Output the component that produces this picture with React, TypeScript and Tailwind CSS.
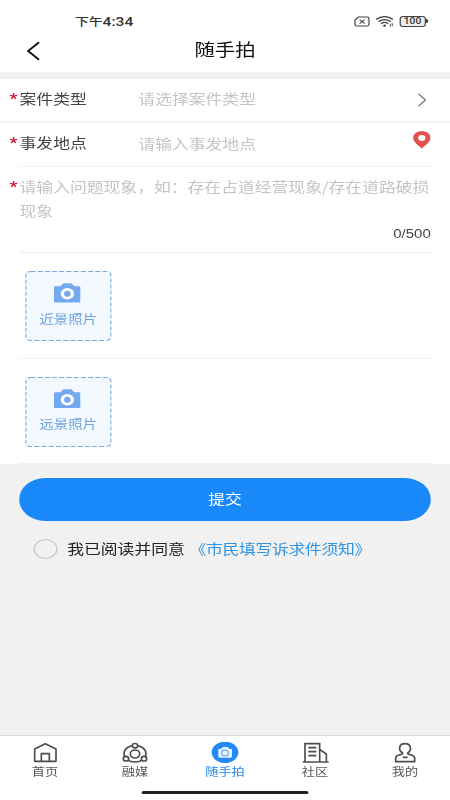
import type { ReactNode } from "react";

type IconProps = {
  viewBox: string;
  className: string;
  children: ReactNode;
};

function Icon({ viewBox, className, children }: IconProps) {
  return (
    <svg
      viewBox={viewBox}
      preserveAspectRatio="none"
      fill="none"
      className={`block shrink-0 ${className}`}
      aria-hidden
    >
      {children}
    </svg>
  );
}

function StatusBar() {
  return (
    <div className="flex h-7 items-start justify-between pt-[13px] pr-[18.5px] pl-[62.5px] text-[#333]">
      <span className="pt-[1px] font-[Roboto,'Noto_Sans_CJK_SC',sans-serif] text-[13px] leading-[16px] font-medium">
        <span className="text-[11.5px]">下午</span>4:34
      </span>
      <div className="flex items-center pt-[2.5px]">
        <Icon viewBox="0 0 48 33" className="h-[11px] w-[13.3px]">
          <path
            d="M13 3H40Q45 3 45 8V25Q45 30 40 30H8Q3 30 3 25V12Z"
            stroke="#444"
            strokeWidth="3.5"
          />
          <path d="M17 11L32 23M32 11L17 23" stroke="#444" strokeWidth="3.5" />
        </Icon>
        <Icon viewBox="0 0 54 33" className="ml-[4.5px] h-[11px] w-[15px]">
          <path
            d="M2 10Q27 -6 52 10M9 17Q27 5 45 17M16 23Q27 15 38 23"
            stroke="#444"
            strokeWidth="4"
          />
          <ellipse cx="27" cy="29" rx="4" ry="3.5" fill="#444" />
          <path d="M44 23V32M50 22V31" stroke="#555" strokeWidth="3" />
        </Icon>
        <div className="ml-[5px] flex h-[11px] w-[21.5px] items-center justify-center rounded-[3px] border border-[#444] bg-[#eee] font-[Roboto,sans-serif] text-[8.5px] leading-none font-medium">
          100
        </div>
        <div className="ml-[0.5px] h-[4px] w-[1.5px] rounded-r bg-[#444]" />
      </div>
    </div>
  );
}

function Header() {
  return (
    <header className="flex h-11 items-center px-[21.5px] pb-[3px]">
      <Icon viewBox="0 0 42 60" className="mt-[5px] h-5 w-[12px]">
        <path d="M37 4L5 30L37 56" stroke="#111" strokeWidth="5.5" />
      </Icon>
      <h1 className="flex-1 pr-[12px] text-center text-[17px] leading-6 text-[#111]">
        随手拍
      </h1>
    </header>
  );
}

function Required() {
  return (
    <span className="w-[8.3px] shrink-0 pt-px font-[Roboto,sans-serif] text-[15px] leading-6 font-medium text-[#c8102e]">
      *
    </span>
  );
}

function PhotoUpload({ label }: { label: string }) {
  return (
    <div className="mr-4 ml-[16.3px] border-b border-[#f1f1f1] pt-[18px] pb-[16.5px] pl-[4.6px]">
      <button
        type="button"
        className="relative flex h-[70px] w-[72px] flex-col items-center bg-[#f3f9ff] pt-[12px]"
      >
        <svg className="absolute inset-0 h-full w-full" fill="none" aria-hidden>
          <rect
            x="0.5"
            y="0.5"
            width="71"
            height="69"
            rx="4"
            stroke="#74a9dc"
            strokeDasharray="4 2"
          />
        </svg>
        <Icon viewBox="0 0 80 58" className="mr-[2.4px] h-[19.5px] w-[22.3px]">
          <path
            d="M4 10H19L26 3Q28 1 31 1H49Q52 1 54 3L61 10H76Q80 10 80 14V54Q80 58 76 58H4Q0 58 0 54V14Q0 10 4 10Z"
            fill="#73a9ee"
          />
          <ellipse cx="40" cy="32" rx="20" ry="17" fill="#fff" />
          <ellipse cx="40" cy="32" rx="10" ry="9" fill="#73a9ee" />
        </Icon>
        <span className="mt-[7px] text-[12px] leading-[18px] text-[#6ba3dc]">{label}</span>
      </button>
    </div>
  );
}

const tabs = [
  {
    label: "首页",
    icon: (
      <path
        d="M14 58V21L46 5L78 21V58ZM34 58V35H58V58"
        stroke="#4d4d4d"
        strokeWidth="5"
        strokeLinejoin="round"
      />
    ),
  },
  {
    label: "融媒",
    icon: (
      <g stroke="#4d4d4d" strokeWidth="5">
        <ellipse cx="45" cy="35" rx="33" ry="25" />
        <ellipse cx="45" cy="36" rx="14" ry="12" />
        <ellipse cx="45" cy="11" rx="8" ry="6.5" fill="#fff" />
        <ellipse cx="18" cy="50" rx="8" ry="7" fill="#fff" />
        <ellipse cx="72" cy="50" rx="8" ry="7" fill="#fff" />
      </g>
    ),
  },
  {
    label: "随手拍",
    active: true,
    icon: (
      <>
        <ellipse cx="45" cy="31" rx="40" ry="32" fill="#2589f5" />
        <path
          d="M28 20H34L38 15H53L57 20H63Q66 20 66 23V43Q66 47 62 47H29Q25 47 25 43V23Q25 20 28 20Z"
          fill="#e8f3ff"
        />
        <ellipse cx="45" cy="33" rx="10" ry="9" stroke="#4a9df7" strokeWidth="3" />
      </>
    ),
  },
  {
    label: "社区",
    icon: (
      <path
        d="M8 60H86M15 60V5H59V60M59 22L79 36V60M25 17H49M25 29H49M25 41H49"
        stroke="#4d4d4d"
        strokeWidth="5"
      />
    ),
  },
  {
    label: "我的",
    icon: (
      <path
        d="M38 33C24 25 26 5 45 5C64 5 66 25 53 33C52 37 57 37 65 39Q74 42 74 49V59H17V49Q17 42 27 39C34 37 39 37 38 33ZM38 46H53"
        stroke="#4d4d4d"
        strokeWidth="5"
      />
    ),
  },
];

function TabBar() {
  return (
    <nav className="flex h-[65px] shrink-0 flex-col border-t border-[#dcdcdc] bg-white">
      <div className="flex h-[55px] shrink-0">
        {tabs.map((tab) => (
          <button
            key={tab.label}
            type="button"
            className="flex w-[75px] flex-col items-center pt-[5.5px]"
          >
            <Icon viewBox="0 0 90 63" className="h-[21px] w-[25px]">
              {tab.icon}
            </Icon>
            <span
              className={
                tab.active
                  ? "text-[11px] leading-4 text-[#2486e6]"
                  : "text-[11px] leading-4 text-[#555]"
              }
            >
              {tab.label}
            </span>
          </button>
        ))}
      </div>
      <div className="mx-auto h-[3px] w-[139px] rounded-full bg-[#222]" />
    </nav>
  );
}

export default function App() {
  return (
    <div className="h-[800px] w-[450px] overflow-hidden bg-[#f1f1f1]">
      <div className="flex h-full w-[375px] origin-top-left scale-x-[1.2] flex-col font-['Noto_Sans_CJK_SC',sans-serif]">
        <div className="bg-white">
          <StatusBar />
          <Header />
        </div>
        <main className="mt-[7px] bg-white">
          <div className="flex h-[44px] items-center border-b-2 border-[#f3f3f3] pr-[20px] pb-[4px] pl-[8px] text-[14px]">
            <Required />
            <span className="w-[99px] leading-6 text-[#444]">案件类型</span>
            <span className="flex-1 leading-6 text-[#c4c4c6]">请选择案件类型</span>
            <Icon viewBox="0 0 27 42" className="mt-[4px] h-[14px] w-[7.5px]">
              <path d="M3 3L24 21L3 39" stroke="#777" strokeWidth="4" />
            </Icon>
          </div>
          <div className="flex h-[43px] items-center pr-[16px] pb-[5px] pl-[8px] text-[14px]">
            <Required />
            <span className="w-[99px] leading-6 text-[#444]">事发地点</span>
            <span className="flex-1 pt-[1px] leading-6 text-[#c4c4c6]">请输入事发地点</span>
            <Icon viewBox="0 0 54 54" className="mb-[4px] h-[18px] w-[15px]">
              <path
                d="M27 53C20 45 1 34 1 21C1 9 12 1 27 1C42 1 53 9 53 21C53 34 34 45 27 53Z"
                fill="#e5504b"
              />
              <ellipse cx="27" cy="21" rx="11" ry="9" fill="#fff" />
            </Icon>
          </div>
          <div className="mr-4 ml-[16.3px] h-px bg-[#f1f1f1]" />
          <div className="flex h-[54px] pt-[7px] pl-[8px] text-[14px] leading-6">
            <Required />
            <p className="w-[344px] text-[#c4c4c6]">
              请输入问题现象，如：存在占道经营现象/存在道路破损
              <br />
              现象
            </p>
          </div>
          <div className="mr-4 ml-[16.3px] h-[32px] border-b border-[#eee] pt-[3px] text-right font-['Liberation_Sans',sans-serif] text-[12.5px] leading-[20px] text-[#444]">
            0/500
          </div>
          <PhotoUpload label="近景照片" />
          <PhotoUpload label="远景照片" />
        </main>
        <div className="flex-1 px-4 pt-[13.5px]">
          <button
            type="button"
            className="flex h-[43.5px] w-full items-center justify-center rounded-full bg-[#1989fa] pb-[1px] text-[14px] text-white"
          >
            提交
          </button>
          <div className="mt-[15px] flex items-center pl-[11.5px] text-[14px] leading-6">
            <span className="mt-[1px] h-5 w-5 rounded-full border border-[#c4c4c4]" />
            <span className="ml-[8.5px] text-[#222]">我已阅读并同意</span>
            <a className="ml-[4px] tracking-[-0.25px] text-[#3094e0]">《市民填写诉求件须知》</a>
          </div>
        </div>
        <TabBar />
      </div>
    </div>
  );
}
